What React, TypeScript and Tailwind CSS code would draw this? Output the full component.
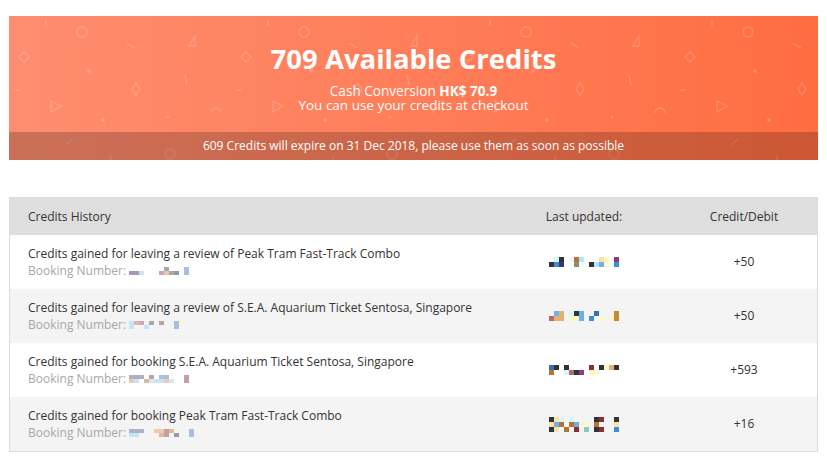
import React from "react";

const PAL: Record<string, string> = {
  k: "#333333",
  c: "#d4f7fb",
  C: "#aee8fb",
  b: "#3a8fd6",
  n: "#2f3a78",
  o: "#b87333",
  g: "#8a9070",
  y: "#fdf7cc",
  Y: "#fde0a5",
  p: "#8e3a78",
  P: "#8e3a9a",
  r: "#8a3030",
  R: "#b06b6b",
  l: "#6eb0ea",
  B: "#3a6fb0",
  O: "#c88a35",
  e: "#e8b070",
  t: "#88c8c8",
  w: "#eef8f8",
  a: "#a898b8",
  q: "#c8e4f4",
  m: "#c8a8c0",
  f: "#f2c8a8",
  h: "#a8a8a8",
  s: "#9898a8",
  L: "#a8c0e0",
  u: "#e0b8a0",
  v: "#c0a0a0",
  z: "#b0b0c4",
  x: "#d8e8f8",
};

function Pix({ rows, cw = 5, ch = 5 }: { rows: string[]; cw?: number; ch?: number }) {
  return (
    <div className="flex flex-col">
      {rows.map((r, i) => (
        <div key={i} className="flex">
          {r.split("").map((c, j) => (
            <div
              key={j}
              style={{ width: cw, height: ch, background: c === "." ? "transparent" : PAL[c] }}
            />
          ))}
        </div>
      ))}
    </div>
  );
}

const rows = [
  {
    title: "Credits gained for leaving a review of Peak Tram Fast-Track Combo",
    booking: [".......h...L", "aaq...mfhs.L"],
    date: [".ck.woC...Yy.p", "kbn..gw.kCly.b"],
    value: "+50",
  },
  {
    title: "Credits gained for leaving a review of S.E.A. Aquarium Ticket Sentosa, Singapore",
    booking: ["qum.h.v..Ly", "q..q.....L."],
    date: [".le.ckl..B...O", "Ree.yyl.bwy.yO"],
    value: "+50",
  },
  {
    title: "Credits gained for booking S.E.A. Aquarium Ticket Sentosa, Singapore",
    booking: ["zzz.v.LL...v", "fq.uxqqfx..v"],
    date: ["Bk.k....r.kyek", "o..cRkP.yy...."],
    value: "+593",
  },
  {
    title: "Credits gained for booking Peak Tram Fast-Track Combo",
    booking: ["zzz..ffvu...L", "qq....uv.s..L"],
    date: ["kYc.c....kr..k", "Ylo.olyy.o...Y", "kYwo.r.t.kr..b"],
    value: "+16",
  },
];

function Pattern() {
  return (
    <svg className="absolute inset-0 h-full w-full" aria-hidden>
      <defs>
        <pattern id="confetti" width="222" height="150" patternUnits="userSpaceOnUse">
          <g fill="none" stroke="rgba(255,255,255,0.18)" strokeWidth="1.3">
            <line x1="37" y1="4" x2="37" y2="10" />
            <circle cx="73" cy="16" r="5" />
            <path d="M186 20 L186 30 L180 30 Z" />
            <line x1="118" y1="27" x2="126" y2="32" />
            <path d="M15 36 L20 41 L15 46 L10 41 Z" />
            <line x1="176" y1="59" x2="178" y2="69" />
            <path d="M127 67 L131 73 L127 79 L123 73 Z" />
            <line x1="5" y1="74" x2="11" y2="74" />
            <path d="M42 85 L52 90 L42 96 Z" />
            <path d="M202 97 A5 5 0 0 1 212 97" />
            <line x1="56" y1="129" x2="63" y2="123" />
            <circle cx="161" cy="138" r="5" />
            <line x1="102" y1="139" x2="102" y2="147" />
          </g>
          <g fill="rgba(255,255,255,0.18)">
            <circle cx="80" cy="55" r="2" />
            <circle cx="94" cy="104" r="2" />
            <circle cx="159" cy="101" r="1.3" />
          </g>
        </pattern>
      </defs>
      <rect width="100%" height="100%" fill="url(#confetti)" />
    </svg>
  );
}

export default function App() {
  return (
    <div
      className="min-h-[465px] w-full bg-white px-[9px] pt-4 text-[12px] text-[#333]"
      style={{ fontFamily: '"Open Sans", "Noto Sans", Arial, sans-serif' }}
    >
      <div className="relative h-[144px] overflow-hidden bg-gradient-to-r from-[#fe8d6f] to-[#ff6d41] text-white">
        <Pattern />
        <div className="relative flex h-[116px] flex-col items-center pt-[25px]">
          <div className="text-[27.5px] font-bold leading-[36px]">709 Available Credits</div>
          <div className="mt-[6px] text-[13.6px] leading-[15px]">
            Cash Conversion <span className="font-bold">HK$ 70.9</span>
          </div>
          <div className="text-[13.5px] leading-[15px]">You can use your credits at checkout</div>
        </div>
        <div className="relative flex h-[28px] items-center justify-center bg-black/20">
          609 Credits will expire on 31 Dec 2018, please use them as soon as possible
        </div>
      </div>

      <div className="mt-[37px] border border-[#dcdcdc]">
        <div className="flex h-[37px] items-center bg-[#dedede]">
          <div className="flex-1 pl-[18px]">Credits History</div>
          <div className="w-[174px] text-center">Last updated:</div>
          <div className="w-[146px] text-center">Credit/Debit</div>
        </div>
        {rows.map((r, i) => (
          <div
            key={i}
            className={`flex h-[54px] items-center ${i % 2 === 1 ? "bg-[#f4f4f4]" : "bg-white"}`}
          >
            <div className="flex flex-1 flex-col pl-[18px]">
              <div className="leading-[17px]">{r.title}</div>
              <div className="flex items-center leading-[17px] text-[#a8a8a8]">
                <span>Booking Number:</span>
                <span className="ml-[3px]">
                  <Pix rows={r.booking} cw={5} ch={4} />
                </span>
              </div>
            </div>
            <div className="flex w-[174px] justify-center">
              <Pix rows={r.date} />
            </div>
            <div className="w-[146px] text-center">{r.value}</div>
          </div>
        ))}
      </div>
    </div>
  );
}
